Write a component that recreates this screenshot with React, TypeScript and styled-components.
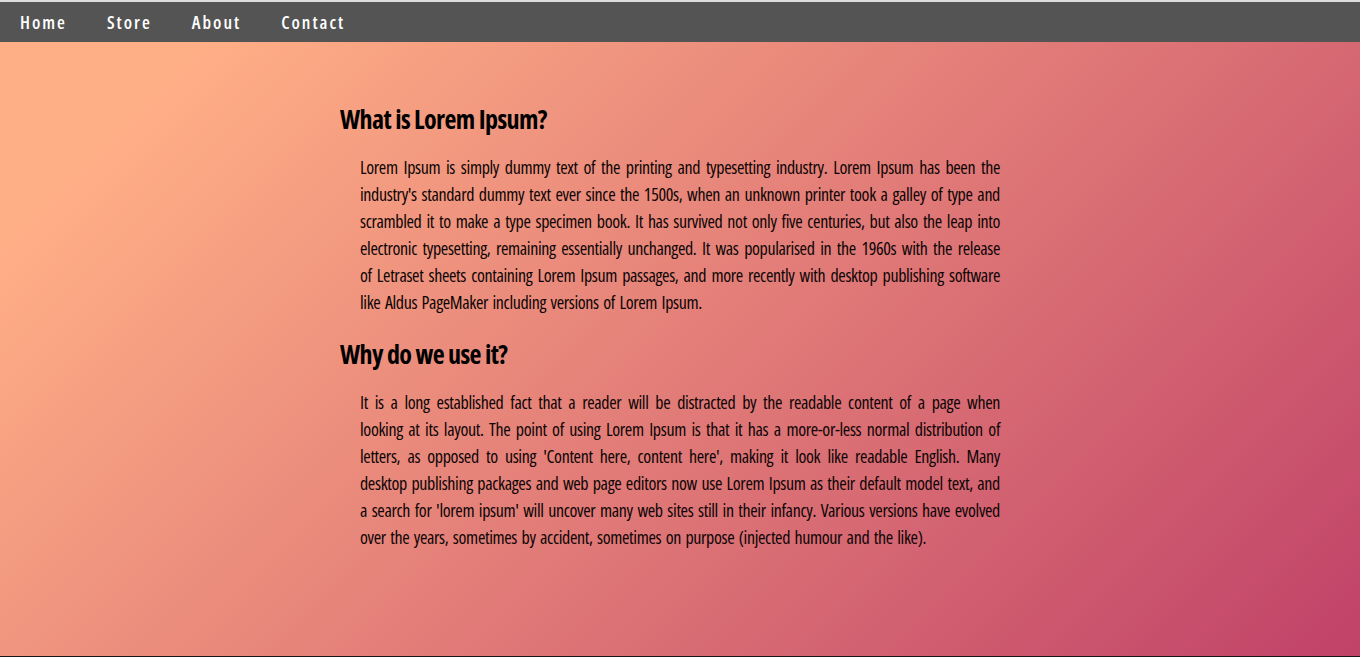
import React from "react";
import styled, { createGlobalStyle } from "styled-components";

const GlobalStyle = createGlobalStyle`
  html, body { margin: 0; padding: 0; }
  body {
    font-family: "Open Sans", "Roboto", sans-serif;
    font-stretch: 75%;
    background: #ddd;
  }
  #root { min-height: 657px; }
`;

const Page = styled.div`
  min-height: 657px;
  display: flex;
  flex-direction: column;
  border-top: 2px solid #dcdcdc;
  box-sizing: border-box;
`;

const NavBar = styled.nav`
  height: 40px;
  background: #545454;
  display: flex;
  align-items: center;
`;

const NavLink = styled.a`
  padding: 0 20px;
  color: #ffffff;
  text-decoration: none;
  font-size: 18px;
  font-weight: 600;
  letter-spacing: 2px;
  line-height: 40px;
  cursor: pointer;
`;

const Main = styled.main`
  flex: 1;
  background: linear-gradient(135deg, #ffaf86 10%, #c04268 100%);
  padding: 59px 25% 60px;
`;

const Heading = styled.h2`
  margin: 0;
  font-size: 26px;
  font-weight: 700;
  line-height: 36px;
  color: #000;
  letter-spacing: -0.6px;
`;

const Paragraph = styled.p`
  margin: 17px 0 20px;
  padding: 0 20px;
  font-size: 18px;
  font-weight: 500;
  line-height: 27px;
  color: #0d0505;
  text-align: justify;
  letter-spacing: -0.366px;
  word-spacing: 1.5px;
`;

const Footer = styled.footer`
  height: 1px;
  background: #1a1414;
`;

const links = ["Home", "Store", "About", "Contact"];

export default function App() {
  return (
    <>
      <GlobalStyle />
      <Page>
        <NavBar>
          {links.map((l) => (
            <NavLink key={l}>{l}</NavLink>
          ))}
        </NavBar>
        <Main>
          <Heading>What is Lorem Ipsum?</Heading>
          <Paragraph>
            Lorem Ipsum is simply dummy text of the printing and typesetting industry. Lorem Ipsum has been the
            industry's standard dummy text ever since the 1500s, when an unknown printer took a galley of type and
            scrambled it to make a type specimen book. It has survived not only five centuries, but also the leap into
            electronic typesetting, remaining essentially unchanged. It was popularised in the 1960s with the release
            of Letraset sheets containing Lorem Ipsum passages, and more recently with desktop publishing software
            like Aldus PageMaker including versions of Lorem Ipsum.
          </Paragraph>
          <Heading>Why do we use it?</Heading>
          <Paragraph>
            It is a long established fact that a reader will be distracted by the readable content of a page when
            looking at its layout. The point of using Lorem Ipsum is that it has a more-or-less normal distribution of
            letters, as opposed to using 'Content here, content here', making it look like readable English. Many
            desktop publishing packages and web page editors now use Lorem Ipsum as their default model text, and
            a search for 'lorem ipsum' will uncover many web sites still in their infancy. Various versions have evolved
            over the years, sometimes by accident, sometimes on purpose (injected humour and the like).
          </Paragraph>
        </Main>
        <Footer />
      </Page>
    </>
  );
}
